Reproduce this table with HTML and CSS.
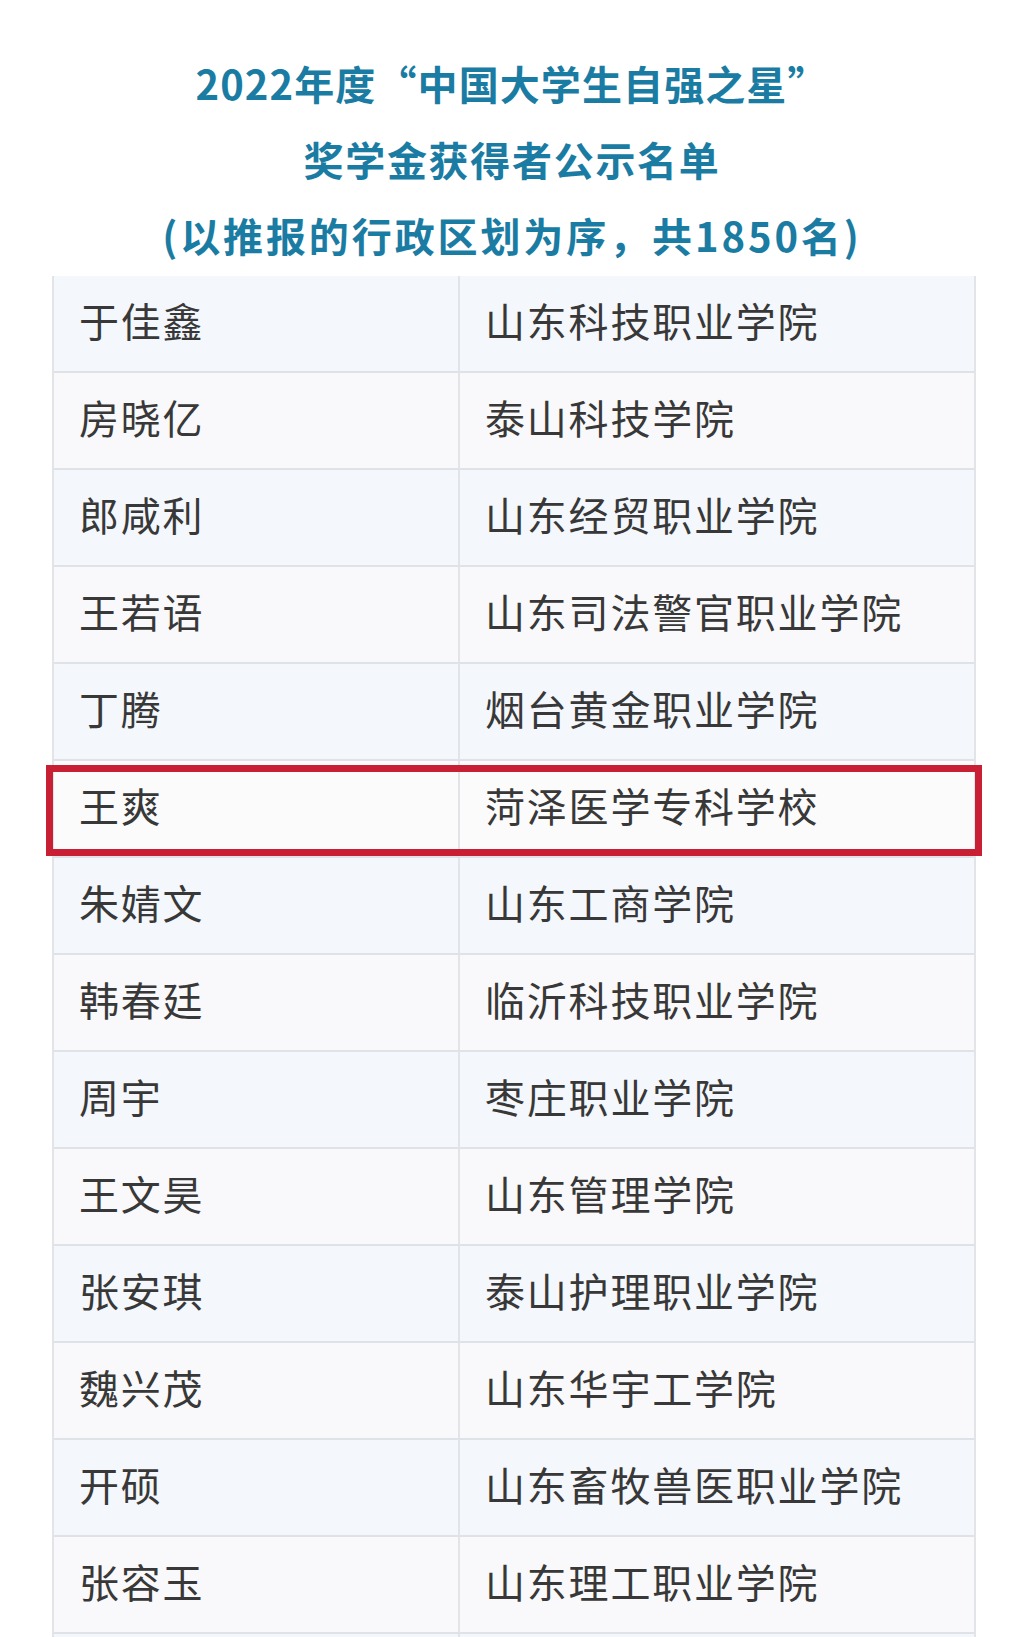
FILE: index.html
```html
<!DOCTYPE html>
<html lang="zh-CN">
<head>
   <meta charset="UTF-8">
   <meta name="viewport" content="width=device-width, initial-scale=1.0">
   <title>自强之星公示名单</title>
   <link rel="stylesheet" href="styles.css">
</head>
<body>
   <div class="page">
      <h2 class="title">
         <span class="line1">2022年度“中国大学生自强之星”</span>
         <span>奖学金获得者公示名单</span>
         <span class="line3">(以推报的行政区划为序，共1850名)</span>
      </h2>

      <div class="list">
         <div class="row"><div class="cell name">于佳鑫</div><div class="cell school">山东科技职业学院</div></div>
         <div class="row"><div class="cell name">房晓亿</div><div class="cell school">泰山科技学院</div></div>
         <div class="row"><div class="cell name">郎咸利</div><div class="cell school">山东经贸职业学院</div></div>
         <div class="row"><div class="cell name">王若语</div><div class="cell school">山东司法警官职业学院</div></div>
         <div class="row"><div class="cell name">丁腾</div><div class="cell school">烟台黄金职业学院</div></div>
         <div class="row marked"><div class="cell name">王爽</div><div class="cell school">菏泽医学专科学校</div></div>
         <div class="row"><div class="cell name">朱婧文</div><div class="cell school">山东工商学院</div></div>
         <div class="row"><div class="cell name">韩春廷</div><div class="cell school">临沂科技职业学院</div></div>
         <div class="row"><div class="cell name">周宇</div><div class="cell school">枣庄职业学院</div></div>
         <div class="row"><div class="cell name">王文昊</div><div class="cell school">山东管理学院</div></div>
         <div class="row"><div class="cell name">张安琪</div><div class="cell school">泰山护理职业学院</div></div>
         <div class="row"><div class="cell name">魏兴茂</div><div class="cell school">山东华宇工学院</div></div>
         <div class="row"><div class="cell name">开硕</div><div class="cell school">山东畜牧兽医职业学院</div></div>
         <div class="row"><div class="cell name">张容玉</div><div class="cell school">山东理工职业学院</div></div>
         <div class="row"><div class="cell name">&nbsp;</div><div class="cell school">&nbsp;</div></div>
      </div>
   </div>
</body>
</html>
```

FILE: styles.css
```css
body{
    margin: 0;
    background: #ffffff;
    font-family: "Noto Sans CJK SC", "Noto Sans", sans-serif;
    overflow: hidden;
}

.page{
    padding-top: 45px;
}

.title{
    margin: 0;
    display: flex;
    flex-direction: column;
    align-items: center;
    font-size: 40px;
    line-height: 76px;
    font-weight: 700;
    letter-spacing: 1.7px;
    color: #1b7ca3;
}

.line1{
    letter-spacing: 1.1px;
}

.line3{
    letter-spacing: 2.9px;
}

.list{
    margin: 3px 48px 0 52px;
    border-left: 2px solid #e2e4e8;
    border-right: 2px solid #e2e4e8;
}

.row{
    position: relative;
    display: grid;
    grid-template-columns: 404px 1fr;
    height: 97px;
    box-sizing: border-box;
    border-bottom: 2px solid #dfe2e6;
    background: #f9f9fb;
}

.row:nth-child(odd){
    background: #f4f7fc;
}

.cell{
    display: flex;
    align-items: center;
    padding-left: 25px;
    padding-bottom: 8px;
    font-size: 40px;
    letter-spacing: 1.8px;
    color: #383838;
}

.school{
    border-left: 2px solid #e2e4e8;
    padding-left: 25px;
}

/* red mark drawn over the row */
.marked{
    background: #fbfbfc;
}

.marked::after{
    content: "";
    position: absolute;
    top: 4px;
    bottom: 0;
    left: -8px;
    right: -8px;
    border: 7px solid #c81f35;
}
```
